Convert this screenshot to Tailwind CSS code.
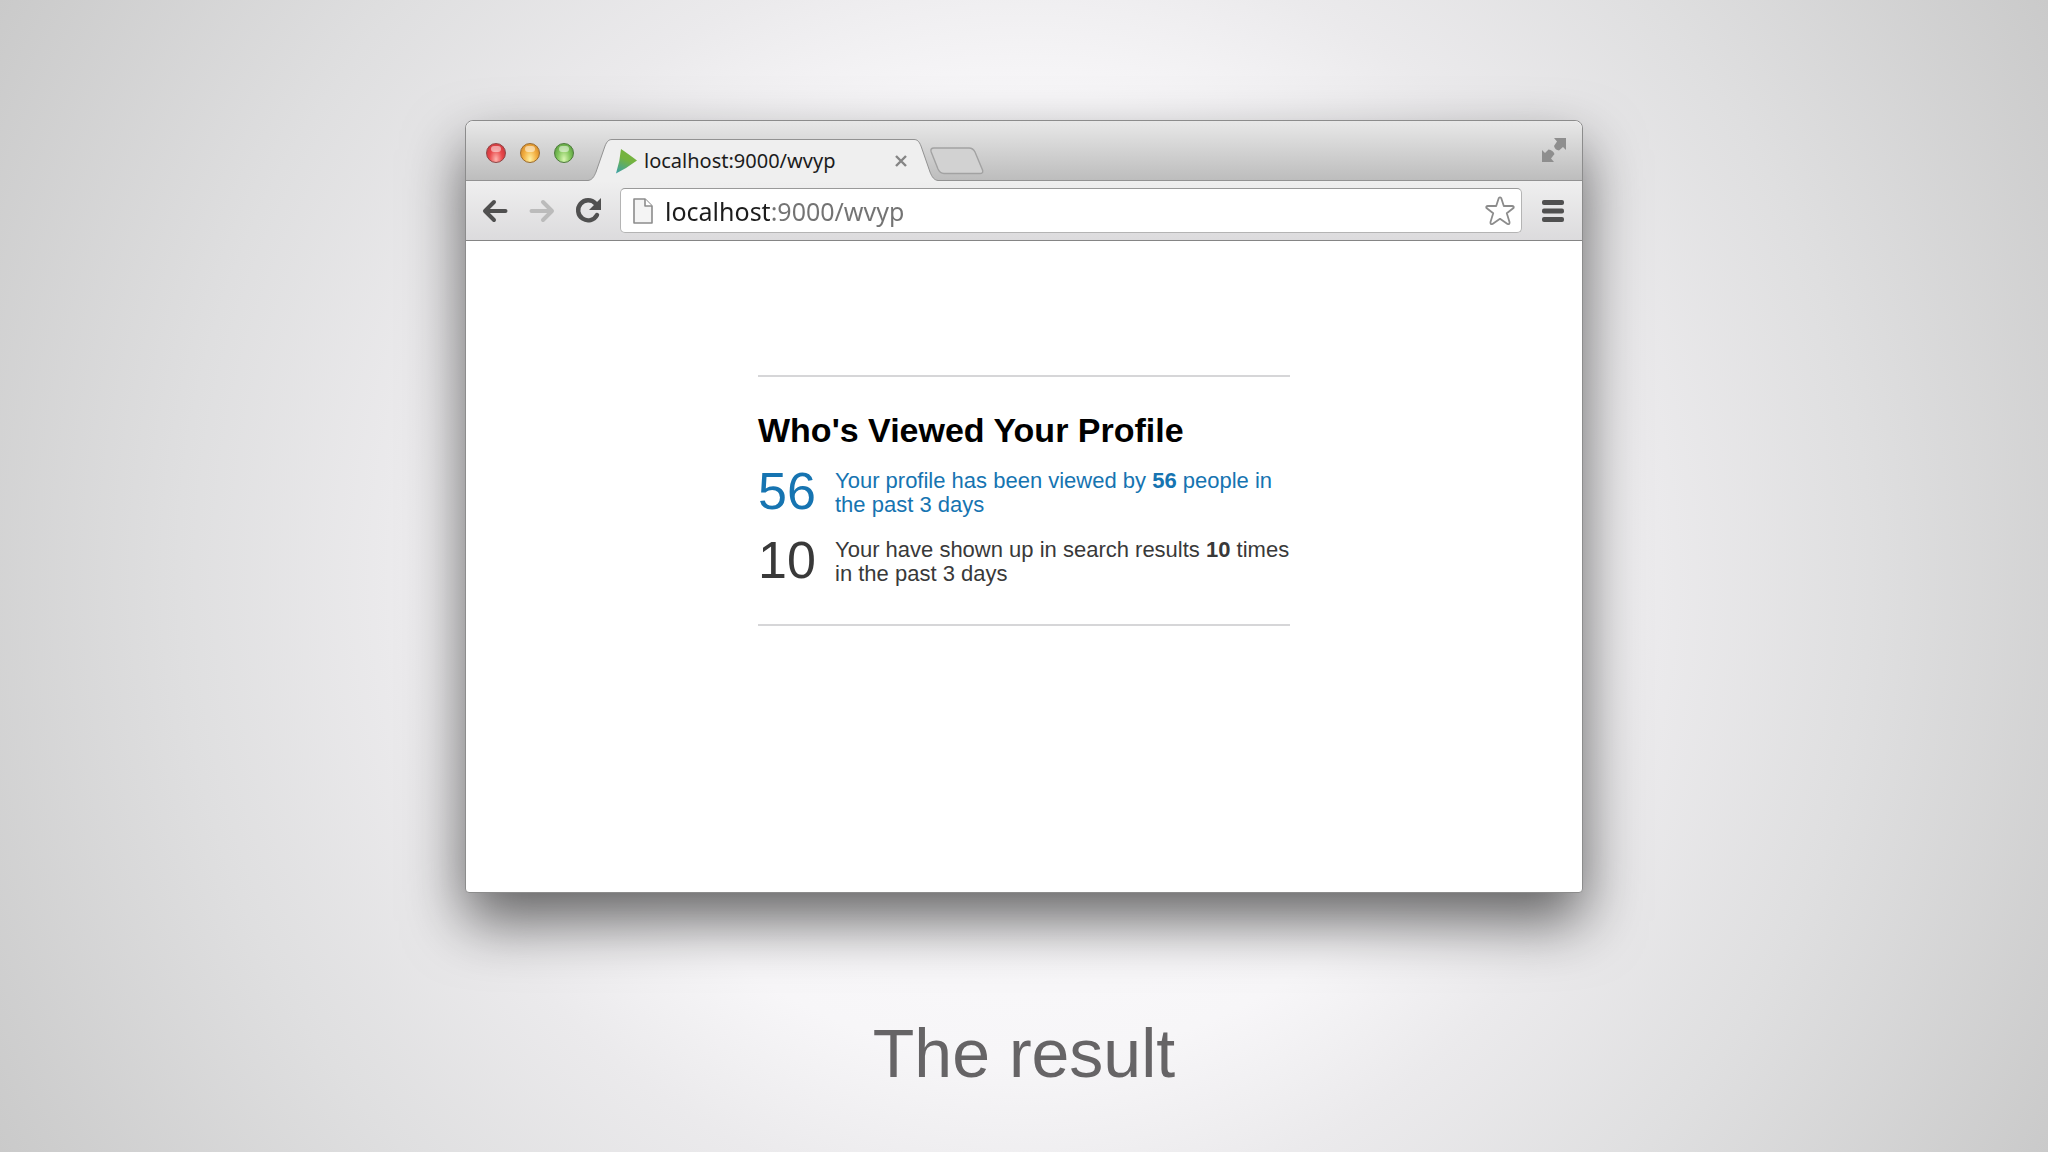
<!DOCTYPE html>
<html lang="en">
<head>
    <meta charset="UTF-8">
    <meta name="viewport" content="width=device-width, initial-scale=1.0">
    <title>The result</title>
    <script src="https://cdn.jsdelivr.net/npm/@tailwindcss/browser@4"></script>
</head>
<body class="min-h-screen flex flex-col items-center px-4 pt-[120px] pb-8 font-['Liberation_Sans',Arial,sans-serif] bg-[radial-gradient(circle_at_center,#fefdff_0%,#f7f6f8_41%,#ebeaec_54%,#dfdfe0_72%,#cacaca_100%)]">

    <!-- Browser window -->
    <main class="w-full max-w-[1118px] rounded-t-lg rounded-b-sm border border-[#8c8c8c] bg-white shadow-[0_28px_60px_rgba(0,0,0,0.6)]">

        <!-- Tab strip -->
        <div class="flex h-[60px] items-end rounded-t-lg border-b border-[#929292] bg-linear-to-b from-[#e8e8e8] to-[#bdbdbd] pl-5 pr-4">
            <div class="flex gap-[14px] self-center pt-1">
                <button type="button" aria-label="Close window" class="size-5 rounded-full border border-[#8f4545] bg-[radial-gradient(ellipse_at_50%_85%,#ffb3ad_0%,#e8494b_50%,#bf3038_100%)] p-px">
                    <span class="mx-auto block h-[6px] w-[10px] -translate-y-1 rounded-full bg-white/50"></span>
                </button>
                <button type="button" aria-label="Minimize window" class="size-5 rounded-full border border-[#9a6a2c] bg-[radial-gradient(ellipse_at_50%_85%,#fff0a0_0%,#f3b043_50%,#c97b1d_100%)] p-px">
                    <span class="mx-auto block h-[6px] w-[10px] -translate-y-1 rounded-full bg-white/50"></span>
                </button>
                <button type="button" aria-label="Zoom window" class="size-5 rounded-full border border-[#4c7a3a] bg-[radial-gradient(ellipse_at_50%_85%,#d8f7b0_0%,#82c55c_50%,#4b8f35_100%)] p-px">
                    <span class="mx-auto block h-[6px] w-[10px] -translate-y-1 rounded-full bg-white/50"></span>
                </button>
            </div>

            <!-- Active tab -->
            <div class="-mb-px ml-[14px] flex h-[42px] items-stretch">
                <svg class="h-[42px] w-6 shrink-0" viewBox="0 0 24 42" fill="none">
                    <path d="M0 41.5C4 41 6 38 8 33L17 7C19 2 21 .5 24 .5V42H0Z" fill="#efefef"/>
                    <path d="M0 41.5C4 41 6 38 8 33L17 7C19 2 21 .5 24 .5" stroke="#929292"/>
                </svg>
                <div class="flex w-[302px] items-center border-t border-[#929292] bg-[#efefef] pl-[3px]">
                    <svg class="h-[26px] w-[23px] shrink-0" viewBox="0 0 23 26">
                        <defs>
                            <linearGradient id="play" x1="0.6" y1="0" x2="0.2" y2="1">
                                <stop offset="0.4" stop-color="#74b33f"/>
                                <stop offset="1" stop-color="#3fa2a0"/>
                            </linearGradient>
                        </defs>
                        <path d="M6 1Q12 5 22 12.5Q12 20 1 25.5Q5 13 6 1Z" fill="url(#play)"/>
                    </svg>
                    <span class="ml-[6px] grow font-['Noto_Sans',sans-serif] text-[20px] leading-6 text-[#1c1c1c]">localhost:9000/wvyp</span>
                    <button type="button" aria-label="Close tab" class="mr-[7px]">
                        <svg class="size-3" viewBox="0 0 12 12" stroke="#858585" stroke-width="2.4"><path d="M1 1L11 11M11 1L1 11"/></svg>
                    </button>
                </div>
                <svg class="h-[42px] w-6 shrink-0" viewBox="0 0 24 42" fill="none">
                    <path d="M0 .5C3 .5 5 2 7 7L16 33C18 38 20 41 24 41.5V42H0Z" fill="#efefef"/>
                    <path d="M0 .5C3 .5 5 2 7 7L16 33C18 38 20 41 24 41.5" stroke="#929292"/>
                </svg>
            </div>
            <button type="button" aria-label="New tab" class="-ml-2 mb-[5px]">
                <svg class="h-[28px] w-[54px]" viewBox="0 0 54 28">
                    <path d="M4 1H39Q43 1 45 5L52.5 23Q53.5 26.5 50 26.5H14Q10 26.5 8 22L1.2 5Q0 1 4 1Z" fill="#d2d2d2" stroke="#a2a2a2" stroke-width="1.4"/>
                </svg>
            </button>
            <button type="button" aria-label="Full screen" class="mb-[18px] ml-auto">
                <svg class="size-6" viewBox="0 0 24 24" fill="#8e8e8e">
                    <path d="M12 0H24V12L21 9L17 12.5Q13 12 12 8L15 3.5Z"/>
                    <path d="M0 12L3 15L6.5 11.5Q11 12 12.5 16L9 20.5L12 24H0Z"/>
                </svg>
            </button>
        </div>

        <!-- Toolbar -->
        <div class="flex h-[60px] items-center border-b border-[#858585] bg-linear-to-b from-[#efefef] to-[#dcdbdd] pl-4 pr-[18px]">
            <button type="button" aria-label="Back">
                <svg class="h-6 w-[26px]" viewBox="0 0 26 24" fill="none" stroke="#505050" stroke-width="4" stroke-linecap="round" stroke-linejoin="round"><path d="M23.5 12H3.5M12 3L3 12L12 21"/></svg>
            </button>
            <button type="button" aria-label="Forward" class="ml-[21px]">
                <svg class="h-6 w-[26px]" viewBox="0 0 26 24" fill="none" stroke="#bbbbbb" stroke-width="4" stroke-linecap="round" stroke-linejoin="round"><path d="M2.5 12H22.5M14 3L23 12L14 21"/></svg>
            </button>
            <button type="button" aria-label="Reload" class="ml-[20px]">
                <svg class="size-[27px]" viewBox="0 0 27 27"><path d="M20.5 6.5A10 10 0 1 0 22 18" fill="none" stroke="#505050" stroke-width="4.4" stroke-linecap="round"/><path d="M26 1V13H14Z" fill="#505050"/></svg>
            </button>
            <form class="ml-[18px] flex h-[45px] min-w-0 grow items-center rounded-[5px] border border-[#b4b4b4] border-t-[#999999] bg-white pl-3 pr-[6px]">
                <svg class="h-[26px] w-5 shrink-0" viewBox="0 0 20 26" fill="#f4f4f4" stroke="#8c8c8c" stroke-width="1.6" stroke-linejoin="round">
                    <path d="M1 1H12L19 8V25H1Z"/>
                    <path d="M12 1V8H19" fill="#ffffff"/>
                </svg>
                <input type="text" aria-label="Address" value="localhost:9000/wvyp" class="ml-3 min-w-0 grow bg-[linear-gradient(90deg,#1c1c1c_106px,#737373_106px)] bg-clip-text font-['Noto_Sans',sans-serif] text-[25px] leading-8 text-transparent outline-none">
                <button type="button" aria-label="Bookmark this page">
                    <svg class="size-[30px]" viewBox="0 0 30 30" fill="#ffffff" stroke="#8c8c8c" stroke-width="1.8" stroke-linejoin="round">
                        <path d="M13.8 2Q15 .6 16.2 2L18.8 10H27Q29.4 10.3 28.5 12L21.8 17.3L24.5 26Q24.8 28.8 22.5 28L15 22.8L7.5 28Q5.2 28.8 5.5 26L8.2 17.3L1.5 12Q.6 10.3 3 10H11.2Z"/>
                    </svg>
                </button>
            </form>
            <button type="button" aria-label="Menu" class="ml-5">
                <svg class="h-[24px] w-[22px]" viewBox="0 0 22 24" fill="#505050"><rect y="1" width="22" height="5" rx="2"/><rect y="9.5" width="22" height="5" rx="2"/><rect y="18" width="22" height="5" rx="2"/></svg>
            </button>
        </div>

        <!-- Page -->
        <div class="px-4 pt-[134px] pb-[266px]">
            <section class="mx-auto max-w-[532px] border-y-2 border-[#d6d6d8] pt-[33px] pb-[38px]">
                <h1 class="text-[34px] leading-10 font-bold text-black">Who's Viewed Your Profile</h1>
                <a href="#views" class="mt-[19px] flex text-[#1674b1]">
                    <span class="w-[77px] shrink-0 text-[52px] leading-11">56</span>
                    <span class="text-[22px] leading-6">Your profile has been viewed by <b>56</b> people in the past 3 days</span>
                </a>
                <div class="mt-[21px] flex text-[#393939]">
                    <span class="w-[77px] shrink-0 text-[52px] leading-11">10</span>
                    <span class="text-[22px] leading-6">Your have shown up in search results <b>10</b> times in the past 3 days</span>
                </div>
            </section>
        </div>
    </main>

    <p class="mt-[120px] text-[68px] leading-20 text-[#666466]">The result</p>
</body>
</html>
